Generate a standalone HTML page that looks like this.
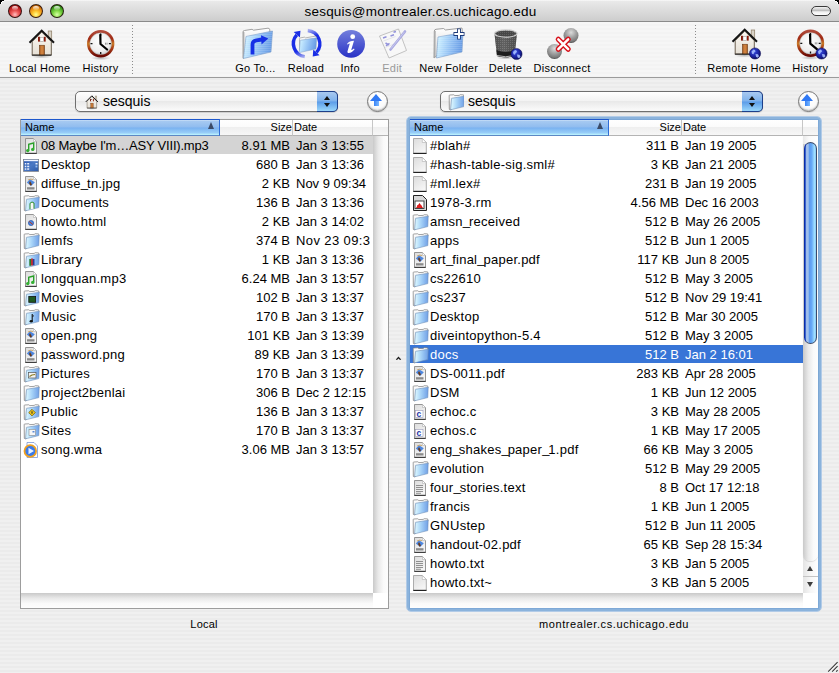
<!DOCTYPE html>
<html><head><meta charset="utf-8"><title>Fugu</title>
<style>
html,body{margin:0;padding:0}
body{width:839px;height:673px;position:relative;overflow:hidden;background:#000;font-family:"Liberation Sans",sans-serif;color:#000}
#win{position:absolute;left:0;top:0;width:839px;height:673px;overflow:hidden;background:repeating-linear-gradient(#f0f0f0 0px,#f0f0f0 2px,#ebebeb 2px,#ebebeb 4px)}
.abs{position:absolute}
#title{left:0;top:0;width:839px;height:21px;background:linear-gradient(#fafafa 0,#e9e9e9 1.5px,#dcdcdc 50%,#cdcdcd 100%);border-bottom:1px solid #8a8a8a}
#title .t{position:absolute;left:1px;width:839px;top:4px;text-align:center;font-size:13.5px;line-height:15px;letter-spacing:0.22px;color:#000}
.light{position:absolute;top:4px;width:14px;height:14px;border-radius:50%;box-sizing:border-box;border:1px solid rgba(30,10,10,0.85)}
.light:after{content:"";position:absolute;left:3px;top:1px;width:6px;height:4px;border-radius:50%;background:linear-gradient(rgba(255,255,255,0.9),rgba(255,255,255,0.1))}
#toolbar{left:0;top:22px;width:839px;height:55px;background:repeating-linear-gradient(#f6f6f6 0px,#f6f6f6 2px,#f3f3f3 2px,#f3f3f3 4px);border-bottom:1px solid #9b9b9b}
.tb{position:absolute;top:0;height:55px}
.tb .lab{position:absolute;top:40px;left:-40px;width:80px;text-align:center;font-size:11px;line-height:13px;letter-spacing:0.25px;white-space:nowrap}
.tb svg{position:absolute;top:4px;left:-16px}
.sep{position:absolute;top:3px;height:49px;width:1px;background:repeating-linear-gradient(#8c8c8c 0 1px,transparent 1px 3px)}
.table{position:absolute;top:119px;height:490px;background:#fff}
.rows{position:absolute;top:16px;left:0;overflow:hidden}
.row{position:absolute;left:0;right:0;height:18px;font-size:13px;line-height:18px;white-space:nowrap}
.row .icw{position:absolute;left:2px;top:1px;width:16px;height:18px}
.row .icw svg{display:block;overflow:visible}
.row .nm{position:absolute;left:20px;top:1px;letter-spacing:0.25px}
.u{font-weight:normal;letter-spacing:-1px;position:relative;top:-1px}
.row .sz{position:absolute;text-align:right;top:1px}
.row .dt{position:absolute;top:1px;overflow:hidden}
.selg{background:#d4d4d4}
.selb{background:#3875d7;color:#fff}
.vtrack{position:absolute;background:linear-gradient(90deg,#c9c9c9,#e9e9e9 35%,#fafafa 70%,#fdfdfd)}
.htrack{position:absolute;background:linear-gradient(#c9c9c9,#e9e9e9 35%,#fafafa 70%,#fdfdfd)}
.popup{position:absolute;top:91px;height:21px;box-sizing:border-box;border:1px solid #6f6f6f;border-radius:5px;background:linear-gradient(#ffffff,#f3f3f3 45%,#e9e9e9 50%,#fbfbfb);box-shadow:0 1px 1px rgba(0,0,0,0.15)}
.popup .pt{position:absolute;left:27px;top:1px;font-size:14px;line-height:16px}
.popup .arr{position:absolute;right:-1px;top:-1px;width:21px;height:21px;box-sizing:border-box;border-radius:0 5px 5px 0;border:1px solid #1d3f8a;border-left:none;background:linear-gradient(#a9c9f0,#7eb2ec 48%,#5c9ce8 52%,#9ad7fb)}
.upc{position:absolute;top:91px;width:21px;height:21px;border-radius:50%;box-sizing:border-box;border:1.5px solid #777;background:radial-gradient(circle at 50% 35%,#ffffff 0,#fbfbfb 55%,#e4e4e4 85%,#c8c8c8 100%);box-shadow:inset 0 -1px 1px rgba(0,0,0,0.2),0 1px 1px rgba(0,0,0,0.12)}
.blab{position:absolute;top:618px;font-size:11px;line-height:13px;text-align:center;letter-spacing:0.2px}

.tlab{position:absolute;top:40px;width:100px;text-align:center;font-size:11px;line-height:13px;letter-spacing:0.25px;white-space:nowrap}
.pane{position:absolute;top:119px;height:490px;box-sizing:border-box;border:1px solid #9d9d9d;background:#fff}
.hc{position:absolute;top:0;height:16px;box-sizing:border-box;font-size:11px;line-height:15px;overflow:hidden;white-space:nowrap}
.hun{background:linear-gradient(#ffffff 0,#fbfbfb 45%,#efefef 50%,#f7f7f7 100%);border-bottom:1px solid #b4b4b4;border-right:1px solid #c6c6c6}
.hsel{top:-1px;height:17px;background:linear-gradient(#cfe3f9 0,#a6c9f1 8%,#90bcef 48%,#79b1f0 52%,#97cdf8 85%,#bff7ff 100%);border-top:1px solid #1d57cc;border-bottom:1px solid #5c88c4;border-right:1px solid #2f6dd6}
.hl{position:absolute;top:0}
.hsel .hl{top:0}
.tri{position:absolute;top:2px;width:0;height:0;border-left:3.5px solid transparent;border-right:3.5px solid transparent;border-bottom:7px solid #3b4a66}
.knob{position:absolute;border-radius:7px 7px 7px 7px;box-sizing:border-box;border:1px solid #3a4a6a;border-left-color:#0a2ea8;background:linear-gradient(90deg,#0c38c0 0,#a2c0ea 14%,#a0c0ec 28%,#5a9af0 42%,#68aaf6 62%,#a0e0ff 86%,#86c4f0 100%)}
.sarr{position:absolute;width:15px;height:16px;box-sizing:border-box}
.sarr+.sarr{border-top:1px solid #c4c4c4}
.au{position:absolute;left:4px;top:5.5px;width:0;height:0;border-left:3.5px solid transparent;border-right:3.5px solid transparent;border-bottom:5px solid #3d3d3d}
.ad{position:absolute;left:4px;top:4.5px;width:0;height:0;border-left:3.5px solid transparent;border-right:3.5px solid transparent;border-top:5px solid #3d3d3d}
.ring{position:absolute;left:406px;top:116px;width:416px;height:496px;box-sizing:border-box;border:1px solid #b2cbe7;border-radius:5px}
.ring2{position:absolute;left:407px;top:117px;width:414px;height:494px;box-sizing:border-box;border:2px solid #8bb3dc;border-radius:4px}
.pane.foc{border-color:#7ea9d7}
.pu{position:absolute;left:7px;top:4px;width:0;height:0;border-left:3px solid transparent;border-right:3px solid transparent;border-bottom:4px solid #111}
.pd{position:absolute;left:7px;top:11px;width:0;height:0;border-left:3px solid transparent;border-right:3px solid transparent;border-top:4px solid #111}
.uparr{position:absolute;left:2.8px;top:1.8px;width:12px;height:14px}
.uparr:before{content:"";position:absolute;left:0;top:0;width:0;height:0;border-left:6px solid transparent;border-right:6px solid transparent;border-bottom:7px solid #2f78f4}
.uparr:after{content:"";position:absolute;left:3.3px;top:7px;width:5.4px;height:5.5px;background:linear-gradient(90deg,#3a84f6,#7ab8ff)}
</style></head><body>
<svg width="0" height="0" style="position:absolute">
<defs>
<linearGradient id="g-page" x1="0" y1="0" x2="0.6" y2="1"><stop offset="0" stop-color="#dcdcdc"/><stop offset="1" stop-color="#f6f6f6"/></linearGradient>
<linearGradient id="g-fold" x1="0" y1="0" x2="1" y2="0"><stop offset="0" stop-color="#e2fbff"/><stop offset="0.45" stop-color="#a8d4f8"/><stop offset="1" stop-color="#6f9fe6"/></linearGradient>
<linearGradient id="g-back" x1="0" y1="0" x2="0" y2="1"><stop offset="0" stop-color="#ffffff"/><stop offset="1" stop-color="#d8d8d8"/></linearGradient>
<linearGradient id="g-desk" x1="0" y1="0" x2="1" y2="1"><stop offset="0" stop-color="#2a56b0"/><stop offset="0.5" stop-color="#4a78c4"/><stop offset="1" stop-color="#2e5aa8"/></linearGradient>
<symbol id="i-page" viewBox="0 0 16 18" overflow="visible"><path d="M1.5 1.5 H10.3 L14.3 5.5 V16.4 H1.5 Z" fill="url(#g-page)" stroke="#a4a4a4" stroke-width="0.9"/><path d="M1.3 16.4 H14.5" stroke="#1a1a1a" stroke-width="1.1"/><path d="M10.3 1.5 V5.5 H14.3 Z" fill="#fff" stroke="#b0b0b0" stroke-width="0.6"/></symbol>
<symbol id="i-npage" viewBox="0 0 16 18" overflow="visible"><path d="M2.5 1.5 H10.5 L13.5 4.5 V16.3 H2.5 Z" fill="url(#g-page)" stroke="#8a8a8a" stroke-width="0.9"/><path d="M2.3 16.4 H13.7" stroke="#333" stroke-width="1"/><path d="M10.5 1.5 V4.5 H13.5 Z" fill="#fff" stroke="#b0b0b0" stroke-width="0.6"/></symbol>
<symbol id="i-doc" viewBox="0 0 16 18" overflow="visible"><use href="#i-page"/></symbol>
<symbol id="i-txt" viewBox="0 0 16 18" overflow="visible"><use href="#i-npage"/><path d="M4 6.5h7M4 8.5h7M4 10.5h7M4 12.5h7M4 14.3h5" stroke="#7a7a7a" stroke-width="0.8"/></symbol>
<symbol id="i-music" viewBox="0 0 16 18" overflow="visible"><use href="#i-npage"/><path d="M5.7 13.5V7.2l5-1.2v6.3" fill="none" stroke="#2aa02a" stroke-width="1.4"/><circle cx="4.7" cy="13.6" r="1.7" fill="#34b034"/><circle cx="9.7" cy="12.4" r="1.7" fill="#34b034"/></symbol>
<symbol id="i-jpg" viewBox="0 0 16 18" overflow="visible"><use href="#i-npage"/><path d="M3.8 7.5 L7 4.3 L11.8 7.2 L8.2 11 Z" fill="#4d86de"/><path d="M7 6 L9 9.5 L7.5 10.8 L6 8 Z" fill="#6a3a1a"/><path d="M5 5 Q7.5 3.5 10 4.5" stroke="#c89a50" stroke-width="0.8" fill="none"/><rect x="4" y="12.2" width="7.5" height="2.3" fill="#8a8a8a"/></symbol>
<symbol id="i-pdf" viewBox="0 0 16 18" overflow="visible"><use href="#i-jpg"/></symbol>
<symbol id="i-html" viewBox="0 0 16 18" overflow="visible"><use href="#i-npage"/><circle cx="8" cy="10" r="2.6" fill="#4d86de" stroke="#1d4aa0" stroke-width="0.6"/><path d="M6.2 8.6 L9.8 11.4" stroke="#c03a1a" stroke-width="1"/></symbol>
<symbol id="i-c" viewBox="0 0 16 18" overflow="visible"><use href="#i-npage"/><rect x="3.5" y="7.5" width="7.5" height="7" fill="#fff" stroke="#9a9ab8" stroke-width="0.6"/><text x="4.4" y="13.8" font-family="Liberation Sans" font-weight="bold" font-size="8.5" fill="#1d36a8">c</text></symbol>
<symbol id="i-rm" viewBox="0 0 16 18" overflow="visible"><path d="M1.5 1.5 H10.5 L14.5 5.5 V16.5 H1.5 Z" fill="#d8d8d8" stroke="#222" stroke-width="1"/><rect x="3" y="7" width="9" height="7.5" fill="#fff" stroke="#333" stroke-width="0.9"/><path d="M4 14 L7.5 9 L11 14 Z" fill="#d01010"/><rect x="5.3" y="11" width="4" height="3" fill="#e02020"/></symbol>
<symbol id="i-folder" viewBox="0 0 16 18" overflow="visible"><path d="M1.2 2.6 Q1.2 2 1.8 2 L5.8 1.8 L6.8 2.6 L11.2 2.4 L12.2 1.7 L15.6 1.9 L16 3.4 L3 17 L1.3 16.4 Z" fill="url(#g-back)" stroke="#7a7a7a" stroke-width="0.7"/><path d="M3.6 5.3 L16.2 3.2 L15.8 13.6 L2.6 16.8 Z" fill="url(#g-fold)" stroke="#6d8fb8" stroke-width="0.6"/></symbol>
<symbol id="i-docsf" viewBox="0 0 16 18" overflow="visible"><use href="#i-folder"/><path d="M7 15.2V9.3 Q9 6.8 11 9 V14.7" fill="#f8f8f8" stroke="#2a8a2a" stroke-width="1"/></symbol>
<symbol id="i-library" viewBox="0 0 16 18" overflow="visible"><use href="#i-folder"/><rect x="6.3" y="8" width="1.8" height="6.8" fill="#2a7a2a"/><rect x="8.1" y="7.5" width="1.8" height="7" fill="#c02020"/><rect x="9.9" y="8" width="1.6" height="6.3" fill="#2a3a9a"/></symbol>
<symbol id="i-movies" viewBox="0 0 16 18" overflow="visible"><use href="#i-folder"/><rect x="5.8" y="7.5" width="6.8" height="5.8" fill="#1f5a1f" stroke="#111" stroke-width="0.8"/></symbol>
<symbol id="i-musicf" viewBox="0 0 16 18" overflow="visible"><use href="#i-folder"/><path d="M9.2 13.5V6.3" stroke="#111" stroke-width="1.1"/><path d="M9.2 6.3 Q11 7.5 9.8 9" stroke="#111" stroke-width="0.8" fill="none"/><ellipse cx="8.2" cy="13.2" rx="1.6" ry="1.3" fill="#111"/></symbol>
<symbol id="i-pictures" viewBox="0 0 16 18" overflow="visible"><use href="#i-folder"/><rect x="5.5" y="7.5" width="7.5" height="5.5" fill="#f4f4f4" stroke="#555" stroke-width="0.7"/><path d="M6.5 11.5 L9 10 L12 9.5" stroke="#8a7a20" stroke-width="1.2" fill="none"/></symbol>
<symbol id="i-public" viewBox="0 0 16 18" overflow="visible"><use href="#i-folder"/><path d="M9 6.3 L12.3 9.6 L9 12.9 L5.7 9.6 Z" fill="#f2c81a" stroke="#6a5200" stroke-width="0.7"/><path d="M9 8.3v2.4" stroke="#222" stroke-width="1"/></symbol>
<symbol id="i-sites" viewBox="0 0 16 18" overflow="visible"><use href="#i-folder"/><rect x="6" y="7.3" width="6.5" height="6" fill="#f6f6f6" stroke="#8a8a8a" stroke-width="0.6"/><rect x="9.5" y="9" width="2" height="1.5" fill="#5a8ad8"/></symbol>
<symbol id="i-desktop" viewBox="0 0 16 18" overflow="visible"><rect x="0.5" y="3.3" width="15.2" height="12.1" fill="url(#g-desk)" stroke="#7a7a7a" stroke-width="0.6"/><rect x="1" y="3.8" width="14.2" height="1.4" fill="#f0f4ff"/><g fill="#e8eefc"><rect x="1.8" y="7" width="1.5" height="1.5"/><rect x="1.8" y="9.7" width="1.5" height="1.5"/><rect x="1.8" y="12.3" width="1.5" height="1.5"/><rect x="4.2" y="7" width="2" height="1.5"/><rect x="4.2" y="9.7" width="2" height="1.5"/><rect x="4.2" y="12.3" width="2" height="1.5"/><rect x="12.5" y="7" width="2" height="1.5"/><rect x="12.5" y="9.6" width="1.8" height="1.8" fill="#9ac0f0"/></g></symbol>
<symbol id="i-wma" viewBox="0 0 16 18" overflow="visible"><path d="M4 1.5 H11 L14.5 5 V16.5 H4 Z" fill="#fff" stroke="#6a8ad0" stroke-width="0.7"/><circle cx="7.3" cy="10" r="5.8" fill="#3a7ae8" stroke="#f0a020" stroke-width="1.8"/><path d="M5.5 6.8 L11 10 L5.5 13.2 Z" fill="#e8f2ff"/></symbol>
</defs>
</svg>

<div id="win">
 <div id="title" class="abs">
  <div class="light" style="left:8px;background:radial-gradient(circle at 50% 80%,#ffc0c0 0,#f06060 30%,#c02020 65%,#800808 100%)"></div>
  <div class="light" style="left:29px;background:radial-gradient(circle at 50% 80%,#ffff90 0,#ffc830 30%,#e08010 65%,#904000 100%)"></div>
  <div class="light" style="left:50px;background:radial-gradient(circle at 50% 80%,#d8ffa8 0,#8ee050 30%,#40a020 65%,#1c6008 100%)"></div>
  <div class="abs" style="left:0;top:0;width:4px;height:1px;background:#000"></div><div class="abs" style="left:0;top:1px;width:2px;height:1px;background:#000"></div><div class="abs" style="left:0;top:2px;width:1px;height:2px;background:#000"></div>
  <div class="abs" style="left:835px;top:0;width:4px;height:1px;background:#000"></div><div class="abs" style="left:837px;top:1px;width:2px;height:1px;background:#000"></div><div class="abs" style="left:838px;top:2px;width:1px;height:2px;background:#000"></div>
  <div class="abs" style="left:2px;top:1px;width:2px;height:1px;background:#fff"></div><div class="abs" style="left:1px;top:2px;width:1px;height:2px;background:#fff"></div>
  <div class="abs" style="left:835px;top:1px;width:2px;height:1px;background:#fff"></div><div class="abs" style="left:837px;top:2px;width:1px;height:2px;background:#fff"></div>
 <div class="t">sesquis@montrealer.cs.uchicago.edu</div>
  <div class="abs" style="left:811px;top:6px;width:20px;height:10px;box-sizing:border-box;border:1px solid #3a3a3a;border-radius:5px;background:linear-gradient(#f5f5f5,#bdbdbd 45%,#f0f0f0 60%,#ffffff)"></div>
 </div>
 <div id="toolbar" class="abs">
  <svg class="abs" style="left:0;top:0" width="839" height="55" viewBox="0 22 839 55">
<defs>
 <linearGradient id="t-wall" x1="0" y1="0" x2="0" y2="1"><stop offset="0" stop-color="#fbf8f2"/><stop offset="1" stop-color="#e6e0d6"/></linearGradient>
 <linearGradient id="t-door" x1="0" y1="0" x2="1" y2="0"><stop offset="0" stop-color="#a85a20"/><stop offset="0.5" stop-color="#d78a45"/><stop offset="1" stop-color="#a85a20"/></linearGradient>
 <radialGradient id="t-shadow" cx="0.5" cy="0.5" r="0.5"><stop offset="0" stop-color="#000" stop-opacity="0.25"/><stop offset="1" stop-color="#000" stop-opacity="0"/></radialGradient>
 <linearGradient id="t-rim" x1="0" y1="0" x2="0" y2="1"><stop offset="0" stop-color="#b04a3a"/><stop offset="0.3" stop-color="#a02a14"/><stop offset="0.5" stop-color="#c87a28"/><stop offset="0.7" stop-color="#a83a14"/><stop offset="1" stop-color="#6a0a04"/></linearGradient>
 <radialGradient id="t-face" cx="0.45" cy="0.4" r="0.6"><stop offset="0" stop-color="#ffffff"/><stop offset="0.7" stop-color="#eeeeee"/><stop offset="1" stop-color="#c8c8c8"/></radialGradient>
 <radialGradient id="t-globe" cx="0.4" cy="0.35" r="0.7"><stop offset="0" stop-color="#3a50e0"/><stop offset="0.6" stop-color="#1a22a0"/><stop offset="1" stop-color="#080a50"/></radialGradient>
 <pattern id="t-mesh" width="2" height="2" patternUnits="userSpaceOnUse"><rect width="2" height="2" fill="#5a5a5a"/><rect width="1" height="1" fill="#8a8a8a"/></pattern>
 <linearGradient id="t-fold" x1="0" y1="0" x2="1" y2="0.2"><stop offset="0" stop-color="#e6fbff"/><stop offset="0.15" stop-color="#c8ecff"/><stop offset="0.6" stop-color="#94c2f4"/><stop offset="1" stop-color="#6a9ee6"/></linearGradient>
 <pattern id="t-stripe" width="4" height="2" patternUnits="userSpaceOnUse"><rect width="4" height="1" fill="#ffffff" opacity="0.13"/></pattern>
 <linearGradient id="t-back" x1="0" y1="0" x2="0" y2="1"><stop offset="0" stop-color="#ffffff"/><stop offset="1" stop-color="#cfcfcf"/></linearGradient>
 <linearGradient id="t-info" x1="0" y1="0" x2="0" y2="1"><stop offset="0" stop-color="#737fdc"/><stop offset="1" stop-color="#2a33c6"/></linearGradient>
 <radialGradient id="t-sphere" cx="0.5" cy="0.3" r="0.7"><stop offset="0" stop-color="#dcdcdc"/><stop offset="0.5" stop-color="#a0a0a0"/><stop offset="0.85" stop-color="#7a7a7a"/><stop offset="1" stop-color="#4a4a4a"/></radialGradient>
 <linearGradient id="t-trash" x1="0" y1="0" x2="1" y2="0"><stop offset="0" stop-color="#3a3a3a"/><stop offset="0.4" stop-color="#6a6a6a"/><stop offset="1" stop-color="#3a3a3a"/></linearGradient>
 <g id="house">
  <ellipse cx="16.5" cy="30.5" rx="10" ry="2" fill="url(#t-shadow)"/>
  <rect x="23.2" y="5" width="3.5" height="9" fill="#d8d2c6" stroke="#8a7a62" stroke-width="0.7"/>
  <path d="M7.2 15.5 L16.7 6 L26.3 15.5 V29 H7.2 Z" fill="url(#t-wall)" stroke="#6a5e4e" stroke-width="1"/>
  <path d="M4.5 16.8 L16.7 4.6 L29 16.8" fill="none" stroke="#141414" stroke-width="2" stroke-linejoin="miter"/>
  <rect x="13" y="10.8" width="2" height="4.8" fill="#8a1a0a"/><rect x="18.7" y="10.8" width="2" height="4.8" fill="#8a1a0a"/>
  <rect x="15" y="11.2" width="3.7" height="4" fill="#ffffff" stroke="#777" stroke-width="0.4"/>
  <rect x="14.4" y="19.2" width="5.2" height="9.8" fill="url(#t-door)" stroke="#5a3010" stroke-width="0.5"/>
  <path d="M6.8 29.2 H26.5" stroke="#222" stroke-width="1"/>
 </g>
 <g id="clock">
  <ellipse cx="0" cy="14.5" rx="10" ry="2" fill="url(#t-shadow)"/>
  <circle cx="0" cy="0" r="12.3" fill="url(#t-face)" stroke="url(#t-rim)" stroke-width="2.8"/><circle cx="0" cy="0" r="10.8" fill="none" stroke="#8a8a8a" stroke-width="0.5" opacity="0.6"/>
  <path d="M0 -10.2v2M0 8.2v2M-10.2 0h2M8.2 0h2" stroke="#111" stroke-width="1.3"/>
  <path d="M-0.4 -8.8 L-0.2 0.3 L6.4 5.8" fill="none" stroke="#000" stroke-width="2.2" stroke-linejoin="round" stroke-linecap="round"/>
  <path d="M4.8 -1v2M6.3 -1v2" stroke="#555" stroke-width="0.6"/>
 </g>
 <g id="globe">
  <circle cx="0" cy="0" r="5.6" fill="url(#t-globe)" stroke="#0a0a50" stroke-width="0.5"/>
  <path d="M-3.5 -2 l2 -2 l1.5 0.5 l0.5 1.5 l-1.5 1.2 l-0.5 1.5 l-1.5 -0.5z M0.5 0.5 l2.5 0.2 l1 2 l-1.5 1.5 l-1.5 -1z" fill="#a8c0ff" opacity="0.9"/>
 </g>
</defs>
<!-- Local Home -->
<use href="#house" transform="translate(25,26)"/>
<!-- History -->
<use href="#clock" transform="translate(100.7,43.7)"/>
<!-- separator -->
<!-- Go To -->
<g transform="translate(240,26)">
 <path d="M3 6 Q3 4.5 4.5 4.5 L12 3.3 L13.5 4.2 L28 2.2 Q29.6 2.2 29.8 3.8 L30 10 L3.2 32.5 Z" fill="url(#t-back)" stroke="#8a8a8a" stroke-width="0.8"/><path d="M3.7 6 L3.4 32" stroke="#aaa" stroke-width="1.4"/>
 <path d="M6 10.5 L32.5 5 L31 26 L3.5 32.5 Z" fill="url(#t-fold)" stroke="#7a9cc8" stroke-width="0.6"/><path d="M6 10.5 L32.5 5 L31 26 L3.5 32.5 Z" fill="url(#t-stripe)"/>
 <path d="M12.5 28.5 V18.5 Q12.5 14.8 16.5 14.3 L22 13.5" fill="none" stroke="#1630e6" stroke-width="3.8"/>
 <path d="M21 9.3 L28.3 12.5 L21.5 18.6 Z" fill="#1630e6"/>
</g>
<!-- Reload -->
<g transform="translate(288,26)">
 <linearGradient id="t-arcfade1" gradientUnits="userSpaceOnUse" x1="17" y1="31" x2="9" y2="9"><stop offset="0" stop-color="#1a2ee6" stop-opacity="0.35"/><stop offset="0.35" stop-color="#1a2ee6"/><stop offset="1" stop-color="#1a2ee6"/></linearGradient>
 <linearGradient id="t-arcfade2" gradientUnits="userSpaceOnUse" x1="20" y1="4" x2="28" y2="26"><stop offset="0" stop-color="#1a2ee6" stop-opacity="0.35"/><stop offset="0.35" stop-color="#1a2ee6"/><stop offset="1" stop-color="#1a2ee6"/></linearGradient>
 <path d="M16.76 30.67 A13.2 13.2 0 0 1 8.79 8.77" fill="none" stroke="url(#t-arcfade1)" stroke-width="3.4"/>
 <path d="M12.47 4.68 L5.67 5.96 L11.91 11.58 Z" fill="#1a2ee6"/>
 <path d="M19.75 4.45 A13.2 13.2 0 0 1 28.41 26.43" fill="none" stroke="url(#t-arcfade2)" stroke-width="3.4"/>
 <path d="M24.73 30.52 L31.53 29.24 L25.29 23.62 Z" fill="#1a2ee6"/>
 <path d="M11.5 13.2 Q11.5 12 12.5 11.8 L16.5 11.2 L17.5 11.9 L27.3 10.2 Q28.2 10.2 28.3 11 L28.4 13 L11.6 25 Z" fill="url(#t-back)" stroke="#8a8a8a" stroke-width="0.6"/>
 <path d="M12.3 14.3 L28.6 11.8 L28 23 L11.2 26.6 Z" fill="url(#t-fold)" stroke="#7a9cc8" stroke-width="0.5"/>
</g>
<!-- Info -->
<circle cx="351.1" cy="43.9" r="13.9" fill="url(#t-info)"/>
<g transform="translate(334,26)">
 <circle cx="18.7" cy="10.7" r="2.4" fill="#fff"/>
 <path d="M13.0 18.0 C14.5 16.0 17.0 14.8 20.0 14.8 L17.2 24.0 C18.2 23.9 19.2 23.2 19.9 22.6 L20.6 23.3 C19.0 25.6 16.8 27.0 14.8 27.0 C13.6 27.0 13.2 26.2 13.5 25.2 L15.8 17.6 C15.0 17.6 14.2 18.0 13.6 18.6 Z" fill="#fff"/>
</g>
<!-- Edit (disabled) -->
<g transform="translate(376,26)" opacity="0.7">
 <path d="M3.5 10 L22.5 3 L30.5 24.5 L13 32 Z" fill="#fafafa" stroke="#9a9a9a" stroke-width="0.8"/>
 <path d="M7 12 l3.5 -1.2 M14.5 10 l3.5 -1.2 M17.5 6.3 l2.5 -0.8 M9.5 17 l3.5 2 M10 19.8 l3.5 -2.5" stroke="#6a6ad0" stroke-width="1.5"/><path d="M7.5 15 l12 -4.5 M9 21.5 l12 -4.5" stroke="#c8c8d8" stroke-width="0.6"/>
 <path d="M29 5.5 L14.5 23.5" stroke="#8a8ad8" stroke-width="2.6" stroke-linecap="round"/><path d="M28.5 5.8 L14.8 22.8" stroke="#c0c0f0" stroke-width="0.8"/>
</g>
<!-- New Folder -->
<g transform="translate(430,24)">
 <path d="M4.3 7 Q4.5 5.5 6 5.3 L13.5 4.5 L15.5 6 L32 4 L32.5 10 L4 34 Z" fill="url(#t-back)" stroke="#8a8a8a" stroke-width="0.8"/><path d="M5 7 L4.6 33.5" stroke="#aaa" stroke-width="1.4"/>
 <path d="M8 13 L33 8.5 L32 28 L6.5 34 Z" fill="url(#t-fold)" stroke="#7a9cc8" stroke-width="0.6"/><path d="M8 13 L33 8.5 L32 28 L6.5 34 Z" fill="url(#t-stripe)"/>
 <path d="M29 4.5 V15.5 M23.5 10 H34.5" stroke="#1d3a7a" stroke-width="3.8"/>
 <path d="M29 5.3 V14.7 M24.3 10 H33.7" stroke="#fff" stroke-width="2"/>
</g>
<!-- Delete -->
<g transform="translate(488,24)">
 <ellipse cx="17.5" cy="34" rx="9" ry="1.5" fill="url(#t-shadow)"/>
 <path d="M6.5 9.5 L9 32 Q17.5 34.5 26.5 32 L29 9.5 Z" fill="url(#t-mesh)"/><path d="M6.5 9.5 L9 32 Q17.5 34.5 26.5 32 L29 9.5 Z" fill="url(#t-trash)" opacity="0.45"/>
 <path d="M8.5 26 Q17.5 30 27 26 L26.5 32 Q17.5 34.5 9 32 Z" fill="#1e1e1e"/>
 <path d="M9 31.5 Q17.5 34 26.5 31.5" fill="none" stroke="#b8b8b8" stroke-width="1"/>
 <ellipse cx="17.8" cy="9.5" rx="11.3" ry="3.6" fill="url(#t-mesh)" stroke="#d0d0d0" stroke-width="1.2"/><ellipse cx="17.8" cy="9.8" rx="10" ry="2.8" fill="#333" opacity="0.5"/>
 <use href="#globe" transform="translate(28.5,30)"/>
</g>
<!-- Disconnect -->
<g transform="translate(544,24)">
 <circle cx="27" cy="11.5" r="7.5" fill="url(#t-sphere)"/>
 <circle cx="10.5" cy="27.5" r="7.5" fill="url(#t-sphere)"/>
 <path d="M14.3 15.3 L24.2 25.2 M24.2 15.3 L14.3 25.2" stroke="#d8101a" stroke-width="5.2" stroke-linecap="round"/>
 <path d="M14.3 15.3 L24.2 25.2 M24.2 15.3 L14.3 25.2" stroke="#fff" stroke-width="2.4" stroke-linecap="round"/>
</g>
<!-- Remote Home -->
<use href="#house" transform="translate(728,25)"/>
<use href="#globe" transform="translate(755,53.5)"/>
<!-- Remote History -->
<use href="#clock" transform="translate(810.5,43.3)"/>
<use href="#globe" transform="translate(821.5,53.5)"/>
</svg>
<div class="sep" style="left:132px"></div>
<div class="sep" style="left:695px"></div>
<div class="tlab" style="left:-10.3px;color:#000">Local Home</div>
<div class="tlab" style="left:50.5px;color:#000">History</div>
<div class="tlab" style="left:205.4px;color:#000">Go To...</div>
<div class="tlab" style="left:255.9px;color:#000">Reload</div>
<div class="tlab" style="left:300.1px;color:#000">Info</div>
<div class="tlab" style="left:342.2px;color:#9a9a9a">Edit</div>
<div class="tlab" style="left:398.7px;color:#000">New Folder</div>
<div class="tlab" style="left:455.5px;color:#000">Delete</div>
<div class="tlab" style="left:512.0px;color:#000">Disconnect</div>
<div class="tlab" style="left:694.1px;color:#000">Remote Home</div>
<div class="tlab" style="left:760.3px;color:#000">History</div>

 </div>
 <div class="pane" style="left:20px;width:369px">
<div class="hc hsel" style="left:0;width:199px"><span class="hl" style="left:4px">Name</span><div class="tri" style="left:187px"></div></div><div class="hc hun" style="left:199px;width:73px"><span class="hl" style="right:0px">Size</span></div><div class="hc hun" style="left:272px;width:80px"><span class="hl" style="left:1px">Date</span></div><div class="hc hun" style="left:352px;width:15px;border-right:none"></div><div class="rows" style="width:352px;height:457px"><div class="row selg" style="top:0px"><div class="icw"><svg class="ic" width="16" height="18" viewBox="0 0 16 18" overflow="visible"><use href="#i-music"/></svg></div><span class="nm" style="letter-spacing:-0.2px">08 Maybe I'm…ASY VIII).mp3</span><span class="sz" style="left:199px;width:70px">8.91 MB</span><span class="dt" style="left:275px;width:74px">Jan 3 13:55</span></div>
<div class="row" style="top:19px"><div class="icw"><svg class="ic" width="16" height="18" viewBox="0 0 16 18" overflow="visible"><use href="#i-desktop"/></svg></div><span class="nm">Desktop</span><span class="sz" style="left:199px;width:70px">680 B</span><span class="dt" style="left:275px;width:74px">Jan 3 13:36</span></div>
<div class="row" style="top:38px"><div class="icw"><svg class="ic" width="16" height="18" viewBox="0 0 16 18" overflow="visible"><use href="#i-jpg"/></svg></div><span class="nm">diffuse<b class=u>_</b>tn.jpg</span><span class="sz" style="left:199px;width:70px">2 KB</span><span class="dt" style="left:275px;width:74px">Nov 9 09:34</span></div>
<div class="row" style="top:57px"><div class="icw"><svg class="ic" width="16" height="18" viewBox="0 0 16 18" overflow="visible"><use href="#i-docsf"/></svg></div><span class="nm">Documents</span><span class="sz" style="left:199px;width:70px">136 B</span><span class="dt" style="left:275px;width:74px">Jan 3 13:36</span></div>
<div class="row" style="top:76px"><div class="icw"><svg class="ic" width="16" height="18" viewBox="0 0 16 18" overflow="visible"><use href="#i-html"/></svg></div><span class="nm">howto.html</span><span class="sz" style="left:199px;width:70px">2 KB</span><span class="dt" style="left:275px;width:74px">Jan 3 14:02</span></div>
<div class="row" style="top:95px"><div class="icw"><svg class="ic" width="16" height="18" viewBox="0 0 16 18" overflow="visible"><use href="#i-folder"/></svg></div><span class="nm">lemfs</span><span class="sz" style="left:199px;width:70px">374 B</span><span class="dt" style="left:275px;width:74px;letter-spacing:0.4px">Nov 23 09:33</span></div>
<div class="row" style="top:114px"><div class="icw"><svg class="ic" width="16" height="18" viewBox="0 0 16 18" overflow="visible"><use href="#i-library"/></svg></div><span class="nm">Library</span><span class="sz" style="left:199px;width:70px">1 KB</span><span class="dt" style="left:275px;width:74px">Jan 3 13:36</span></div>
<div class="row" style="top:133px"><div class="icw"><svg class="ic" width="16" height="18" viewBox="0 0 16 18" overflow="visible"><use href="#i-music"/></svg></div><span class="nm">longquan.mp3</span><span class="sz" style="left:199px;width:70px">6.24 MB</span><span class="dt" style="left:275px;width:74px">Jan 3 13:57</span></div>
<div class="row" style="top:152px"><div class="icw"><svg class="ic" width="16" height="18" viewBox="0 0 16 18" overflow="visible"><use href="#i-movies"/></svg></div><span class="nm">Movies</span><span class="sz" style="left:199px;width:70px">102 B</span><span class="dt" style="left:275px;width:74px">Jan 3 13:37</span></div>
<div class="row" style="top:171px"><div class="icw"><svg class="ic" width="16" height="18" viewBox="0 0 16 18" overflow="visible"><use href="#i-musicf"/></svg></div><span class="nm">Music</span><span class="sz" style="left:199px;width:70px">170 B</span><span class="dt" style="left:275px;width:74px">Jan 3 13:37</span></div>
<div class="row" style="top:190px"><div class="icw"><svg class="ic" width="16" height="18" viewBox="0 0 16 18" overflow="visible"><use href="#i-jpg"/></svg></div><span class="nm">open.png</span><span class="sz" style="left:199px;width:70px">101 KB</span><span class="dt" style="left:275px;width:74px">Jan 3 13:39</span></div>
<div class="row" style="top:209px"><div class="icw"><svg class="ic" width="16" height="18" viewBox="0 0 16 18" overflow="visible"><use href="#i-jpg"/></svg></div><span class="nm">password.png</span><span class="sz" style="left:199px;width:70px">89 KB</span><span class="dt" style="left:275px;width:74px">Jan 3 13:39</span></div>
<div class="row" style="top:228px"><div class="icw"><svg class="ic" width="16" height="18" viewBox="0 0 16 18" overflow="visible"><use href="#i-pictures"/></svg></div><span class="nm">Pictures</span><span class="sz" style="left:199px;width:70px">170 B</span><span class="dt" style="left:275px;width:74px">Jan 3 13:37</span></div>
<div class="row" style="top:247px"><div class="icw"><svg class="ic" width="16" height="18" viewBox="0 0 16 18" overflow="visible"><use href="#i-folder"/></svg></div><span class="nm">project2benlai</span><span class="sz" style="left:199px;width:70px">306 B</span><span class="dt" style="left:275px;width:74px">Dec 2 12:15</span></div>
<div class="row" style="top:266px"><div class="icw"><svg class="ic" width="16" height="18" viewBox="0 0 16 18" overflow="visible"><use href="#i-public"/></svg></div><span class="nm">Public</span><span class="sz" style="left:199px;width:70px">136 B</span><span class="dt" style="left:275px;width:74px">Jan 3 13:37</span></div>
<div class="row" style="top:285px"><div class="icw"><svg class="ic" width="16" height="18" viewBox="0 0 16 18" overflow="visible"><use href="#i-sites"/></svg></div><span class="nm">Sites</span><span class="sz" style="left:199px;width:70px">170 B</span><span class="dt" style="left:275px;width:74px">Jan 3 13:37</span></div>
<div class="row" style="top:304px"><div class="icw"><svg class="ic" width="16" height="18" viewBox="0 0 16 18" overflow="visible"><use href="#i-wma"/></svg></div><span class="nm">song.wma</span><span class="sz" style="left:199px;width:70px">3.06 MB</span><span class="dt" style="left:275px;width:74px">Jan 3 13:57</span></div></div>
<div class="vtrack" style="left:352px;top:16px;width:15px;height:457px"></div><div class="htrack" style="left:0;top:473px;width:352px;height:15px"></div><div class="abs" style="left:352px;top:473px;width:15px;height:15px;background:#fff"></div></div>
<div class="ring"></div><div class="ring2"></div><div class="pane foc" style="left:409px;width:410px">
<div class="hc hsel" style="left:0;width:199px"><span class="hl" style="left:4px">Name</span><div class="tri" style="left:187px"></div></div><div class="hc hun" style="left:199px;width:73px"><span class="hl" style="right:0px">Size</span></div><div class="hc hun" style="left:272px;width:121px"><span class="hl" style="left:1px">Date</span></div><div class="hc hun" style="left:393px;width:15px;border-right:none"></div><div class="rows" style="width:393px;height:457px"><div class="row" style="top:0px"><div class="icw"><svg class="ic" width="16" height="18" viewBox="0 0 16 18" overflow="visible"><use href="#i-doc"/></svg></div><span class="nm">#blah#</span><span class="sz" style="left:199px;width:70px">311 B</span><span class="dt" style="left:275px;width:114px">Jan 19 2005</span></div>
<div class="row" style="top:19px"><div class="icw"><svg class="ic" width="16" height="18" viewBox="0 0 16 18" overflow="visible"><use href="#i-doc"/></svg></div><span class="nm">#hash-table-sig.sml#</span><span class="sz" style="left:199px;width:70px">3 KB</span><span class="dt" style="left:275px;width:114px">Jan 21 2005</span></div>
<div class="row" style="top:38px"><div class="icw"><svg class="ic" width="16" height="18" viewBox="0 0 16 18" overflow="visible"><use href="#i-doc"/></svg></div><span class="nm">#ml.lex#</span><span class="sz" style="left:199px;width:70px">231 B</span><span class="dt" style="left:275px;width:114px">Jan 19 2005</span></div>
<div class="row" style="top:57px"><div class="icw"><svg class="ic" width="16" height="18" viewBox="0 0 16 18" overflow="visible"><use href="#i-rm"/></svg></div><span class="nm">1978-3.rm</span><span class="sz" style="left:199px;width:70px">4.56 MB</span><span class="dt" style="left:275px;width:114px">Dec 16 2003</span></div>
<div class="row" style="top:76px"><div class="icw"><svg class="ic" width="16" height="18" viewBox="0 0 16 18" overflow="visible"><use href="#i-folder"/></svg></div><span class="nm">amsn<b class=u>_</b>received</span><span class="sz" style="left:199px;width:70px">512 B</span><span class="dt" style="left:275px;width:114px">May 26 2005</span></div>
<div class="row" style="top:95px"><div class="icw"><svg class="ic" width="16" height="18" viewBox="0 0 16 18" overflow="visible"><use href="#i-folder"/></svg></div><span class="nm">apps</span><span class="sz" style="left:199px;width:70px">512 B</span><span class="dt" style="left:275px;width:114px">Jun 1 2005</span></div>
<div class="row" style="top:114px"><div class="icw"><svg class="ic" width="16" height="18" viewBox="0 0 16 18" overflow="visible"><use href="#i-pdf"/></svg></div><span class="nm">art<b class=u>_</b>final<b class=u>_</b>paper.pdf</span><span class="sz" style="left:199px;width:70px">117 KB</span><span class="dt" style="left:275px;width:114px">Jun 8 2005</span></div>
<div class="row" style="top:133px"><div class="icw"><svg class="ic" width="16" height="18" viewBox="0 0 16 18" overflow="visible"><use href="#i-folder"/></svg></div><span class="nm">cs22610</span><span class="sz" style="left:199px;width:70px">512 B</span><span class="dt" style="left:275px;width:114px">May 3 2005</span></div>
<div class="row" style="top:152px"><div class="icw"><svg class="ic" width="16" height="18" viewBox="0 0 16 18" overflow="visible"><use href="#i-folder"/></svg></div><span class="nm">cs237</span><span class="sz" style="left:199px;width:70px">512 B</span><span class="dt" style="left:275px;width:114px">Nov 29 19:41</span></div>
<div class="row" style="top:171px"><div class="icw"><svg class="ic" width="16" height="18" viewBox="0 0 16 18" overflow="visible"><use href="#i-folder"/></svg></div><span class="nm">Desktop</span><span class="sz" style="left:199px;width:70px">512 B</span><span class="dt" style="left:275px;width:114px">Mar 30 2005</span></div>
<div class="row" style="top:190px"><div class="icw"><svg class="ic" width="16" height="18" viewBox="0 0 16 18" overflow="visible"><use href="#i-folder"/></svg></div><span class="nm">diveintopython-5.4</span><span class="sz" style="left:199px;width:70px">512 B</span><span class="dt" style="left:275px;width:114px">May 3 2005</span></div>
<div class="row selb" style="top:209px"><div class="icw"><svg class="ic" width="16" height="18" viewBox="0 0 16 18" overflow="visible"><use href="#i-folder"/></svg></div><span class="nm">docs</span><span class="sz" style="left:199px;width:70px">512 B</span><span class="dt" style="left:275px;width:114px">Jan 2 16:01</span></div>
<div class="row" style="top:228px"><div class="icw"><svg class="ic" width="16" height="18" viewBox="0 0 16 18" overflow="visible"><use href="#i-pdf"/></svg></div><span class="nm">DS-0011.pdf</span><span class="sz" style="left:199px;width:70px">283 KB</span><span class="dt" style="left:275px;width:114px">Apr 28 2005</span></div>
<div class="row" style="top:247px"><div class="icw"><svg class="ic" width="16" height="18" viewBox="0 0 16 18" overflow="visible"><use href="#i-folder"/></svg></div><span class="nm">DSM</span><span class="sz" style="left:199px;width:70px">1 KB</span><span class="dt" style="left:275px;width:114px">Jun 12 2005</span></div>
<div class="row" style="top:266px"><div class="icw"><svg class="ic" width="16" height="18" viewBox="0 0 16 18" overflow="visible"><use href="#i-c"/></svg></div><span class="nm">echoc.c</span><span class="sz" style="left:199px;width:70px">3 KB</span><span class="dt" style="left:275px;width:114px">May 28 2005</span></div>
<div class="row" style="top:285px"><div class="icw"><svg class="ic" width="16" height="18" viewBox="0 0 16 18" overflow="visible"><use href="#i-c"/></svg></div><span class="nm">echos.c</span><span class="sz" style="left:199px;width:70px">1 KB</span><span class="dt" style="left:275px;width:114px">May 17 2005</span></div>
<div class="row" style="top:304px"><div class="icw"><svg class="ic" width="16" height="18" viewBox="0 0 16 18" overflow="visible"><use href="#i-pdf"/></svg></div><span class="nm">eng<b class=u>_</b>shakes<b class=u>_</b>paper<b class=u>_</b>1.pdf</span><span class="sz" style="left:199px;width:70px">66 KB</span><span class="dt" style="left:275px;width:114px">May 3 2005</span></div>
<div class="row" style="top:323px"><div class="icw"><svg class="ic" width="16" height="18" viewBox="0 0 16 18" overflow="visible"><use href="#i-folder"/></svg></div><span class="nm">evolution</span><span class="sz" style="left:199px;width:70px">512 B</span><span class="dt" style="left:275px;width:114px">May 29 2005</span></div>
<div class="row" style="top:342px"><div class="icw"><svg class="ic" width="16" height="18" viewBox="0 0 16 18" overflow="visible"><use href="#i-txt"/></svg></div><span class="nm">four<b class=u>_</b>stories.text</span><span class="sz" style="left:199px;width:70px">8 B</span><span class="dt" style="left:275px;width:114px">Oct 17 12:18</span></div>
<div class="row" style="top:361px"><div class="icw"><svg class="ic" width="16" height="18" viewBox="0 0 16 18" overflow="visible"><use href="#i-folder"/></svg></div><span class="nm">francis</span><span class="sz" style="left:199px;width:70px">1 KB</span><span class="dt" style="left:275px;width:114px">Jun 1 2005</span></div>
<div class="row" style="top:380px"><div class="icw"><svg class="ic" width="16" height="18" viewBox="0 0 16 18" overflow="visible"><use href="#i-folder"/></svg></div><span class="nm">GNUstep</span><span class="sz" style="left:199px;width:70px">512 B</span><span class="dt" style="left:275px;width:114px">Jun 11 2005</span></div>
<div class="row" style="top:399px"><div class="icw"><svg class="ic" width="16" height="18" viewBox="0 0 16 18" overflow="visible"><use href="#i-pdf"/></svg></div><span class="nm">handout-02.pdf</span><span class="sz" style="left:199px;width:70px">65 KB</span><span class="dt" style="left:275px;width:114px">Sep 28 15:34</span></div>
<div class="row" style="top:418px"><div class="icw"><svg class="ic" width="16" height="18" viewBox="0 0 16 18" overflow="visible"><use href="#i-txt"/></svg></div><span class="nm">howto.txt</span><span class="sz" style="left:199px;width:70px">3 KB</span><span class="dt" style="left:275px;width:114px">Jan 5 2005</span></div>
<div class="row" style="top:437px"><div class="icw"><svg class="ic" width="16" height="18" viewBox="0 0 16 18" overflow="visible"><use href="#i-doc"/></svg></div><span class="nm">howto.txt~</span><span class="sz" style="left:199px;width:70px">3 KB</span><span class="dt" style="left:275px;width:114px">Jan 5 2005</span></div></div>
<div class="abs" style="left:393px;top:16px;width:15px;height:457px;background:linear-gradient(90deg,#e4e4e4,#f6f6f6 50%,#fff)"></div><div class="vtrack" style="left:393px;top:16px;width:15px;height:425px;border-radius:0 0 7px 7px;box-shadow:0 1px 1px rgba(0,0,0,0.12)"></div><div class="htrack" style="left:0;top:473px;width:393px;height:15px"></div><div class="abs" style="left:393px;top:473px;width:15px;height:15px;background:#fff"></div><div class="abs" style="left:393px;top:16px;width:15px;height:8px;background:linear-gradient(90deg,#e8e8e8,#fafafa 40%,#ffffff)"></div><div class="knob" style="left:394px;top:22px;width:13px;height:202px"></div><div class="sarr" style="left:393px;top:440px"><div class="au"></div></div><div class="sarr" style="left:393px;top:456px"><div class="ad"></div></div></div>
<div class="blab" style="left:154px;width:100px">Local</div><div class="blab" style="left:514px;width:200px;letter-spacing:0.6px">montrealer.cs.uchicago.edu</div><div class="popup" style="left:75px;width:263px"><svg class="abs" style="left:8px;top:2px" width="16" height="16" viewBox="1 1 32 32"><use href="#house" transform="translate(0,0)"/></svg><span class="pt">sesquis</span><div class="arr"><div class="pu"></div><div class="pd"></div></div></div>
<div class="upc" style="left:366.5px"><div class="uparr"></div></div>
<div class="popup" style="left:440px;width:323px"><svg class="abs" style="left:7px;top:1px" width="16" height="18" viewBox="0 0 16 18"><use href="#i-folder"/></svg><span class="pt">sesquis</span><div class="arr"><div class="pu"></div><div class="pd"></div></div></div>
<div class="upc" style="left:797.5px"><div class="uparr"></div></div>
<svg class="abs" style="left:395px;top:355px" width="7" height="6"><path d="M0.8 4.6 L3.5 1.6 L6.2 4.6 L5 5 L3.5 3.4 L2 5 Z" fill="#1a1a1a"/></svg>
<svg class="abs" style="left:826px;top:660px" width="13" height="13"><path d="M2.2 11.6 L11.6 2.2 M6.2 11.6 L11.6 6.2 M10.2 11.6 L11.6 10.2" stroke="#3a3a3a" stroke-width="1.1"/><path d="M3.2 12.4 L12.4 3.2 M7.2 12.4 L12.4 7.2" stroke="#fff" stroke-width="0.8" opacity="0.7"/></svg>

</div>
</body></html>
